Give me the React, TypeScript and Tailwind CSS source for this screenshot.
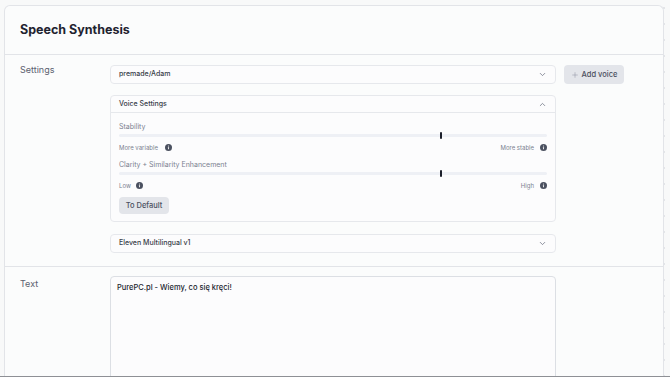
import { ChevronDown, ChevronUp, Plus } from "lucide-react";

function InfoIcon() {
  return (
    <svg width="7" height="7" viewBox="0 0 16 16" className="shrink-0">
      <circle cx="8" cy="8" r="8" fill="#4b5160" />
      <rect x="7" y="7" width="2" height="5" rx="0.8" fill="#fff" />
      <circle cx="8" cy="4.6" r="1.2" fill="#fff" />
    </svg>
  );
}

function Slider({ value }: { value: number }) {
  return (
    <div className="relative mt-[2px] h-[3px] w-full rounded-full bg-[#eef0f5]">
      <div
        className="absolute top-[-2px] h-[7px] w-[2px] rounded-[1px] bg-[#1c1f2a]"
        style={{ left: `${value}%` }}
      />
    </div>
  );
}

function SliderField({
  label,
  low,
  high,
  lowIcon,
}: {
  label: string;
  low: string;
  high: string;
  lowIcon: number;
}) {
  return (
    <div>
      <div className="h-[10px] text-[7px] leading-[10px] text-[#7b8190]">{label}</div>
      <Slider value={75} />
      <div className="mt-[5px] flex h-[10px] items-center justify-between text-[6px] text-[#7b8190]">
        <div className="flex items-center" style={{ gap: lowIcon }}>
          <span>{low}</span>
          <InfoIcon />
        </div>
        <div className="flex items-center gap-[6px]">
          <span>{high}</span>
          <InfoIcon />
        </div>
      </div>
    </div>
  );
}

function Select({ value }: { value: string }) {
  return (
    <div className="flex h-[19px] w-[446px] items-center justify-between rounded-[4px] border border-[#e6e8ec] bg-[#fcfcfd] pl-[8px] pr-[8px] text-[7px] font-medium text-[#383c48]">
      <span>{value}</span>
      <ChevronDown size={9} strokeWidth={2} color="#6b7080" />
    </div>
  );
}

export default function App() {
  return (
    <div
      className="flex h-[377px] w-[670px] flex-col overflow-hidden bg-[#f8f9f9] bg-[radial-gradient(#e3e5e8_0.8px,transparent_0.8px)] bg-[size:16px_16px] pl-[4px] pr-[6px] pt-[5px]"
      style={{ fontFamily: "Inter, 'Noto Sans', sans-serif" }}
    >
      <div className="flex-1 overflow-hidden rounded-t-[6px] border border-b-0 border-[#e2e4e8] bg-[#fbfcfc]">
        <div className="flex h-[49px] items-center border-b border-[#e2e4e8] px-[15px]">
          <h1 className="text-[12.5px] font-bold text-[#1f2330]">Speech Synthesis</h1>
        </div>

        <div className="flex border-b border-[#e2e4e8] pb-[13px] pt-[10px]">
          <div className="w-[105px] pl-[15px] text-[9px] leading-[10px] text-[#5b6170]">
            Settings
          </div>
          <div className="flex flex-col">
            <div className="flex items-center gap-[8px]">
              <Select value="premade/Adam" />
              <button className="flex h-[19px] w-[60px] items-center justify-center gap-[3px] rounded-[4px] bg-[#e3e5ea] text-[7.5px] font-medium text-[#4b5060]">
                <Plus size={8} strokeWidth={1.5} color="#8a8f9c" />
                Add voice
              </button>
            </div>

            <div className="mt-[11px] w-[446px] rounded-[4px] border border-[#e6e8ec] bg-[#fcfcfd]">
              <div className="flex h-[17px] items-center justify-between border-b border-[#e6e8ec] pl-[8px] pr-[8px] text-[7px] font-medium text-[#383c48]">
                <span>Voice Settings</span>
                <ChevronUp size={9} strokeWidth={2} color="#6b7080" />
              </div>
              <div className="px-[8px] pb-[7px] pt-[9px]">
                <SliderField label="Stability" low="More variable" high="More stable" lowIcon={7} />
                <div className="mt-[8px]">
                  <SliderField
                    label="Clarity + Similarity Enhancement"
                    low="Low"
                    high="High"
                    lowIcon={5}
                  />
                </div>
                <button className="mt-[7px] h-[17px] w-[50px] rounded-[4px] bg-[#e3e5ea] text-[7.5px] font-medium text-[#4b5060]">
                  To Default
                </button>
              </div>
            </div>

            <div className="mt-[12px]">
              <Select value="Eleven Multilingual v1" />
            </div>
          </div>
        </div>

        <div className="flex pt-[9px]">
          <div className="w-[105px] pl-[15px] pt-[3px] text-[9px] leading-[10px] text-[#5b6170]">
            Text
          </div>
          <div className="h-[120px] w-[446px] rounded-[4px] border border-[#dcdfe4] bg-[#fcfcfd] px-[6px] pt-[5px] text-[7.5px] font-medium text-[#23262f]">
            PurePC.pl - Wiemy, co się kręci!
          </div>
        </div>
      </div>
      <div className="h-[1px] w-[676px] -ml-[4px] bg-[#8e9095]" />
    </div>
  );
}
